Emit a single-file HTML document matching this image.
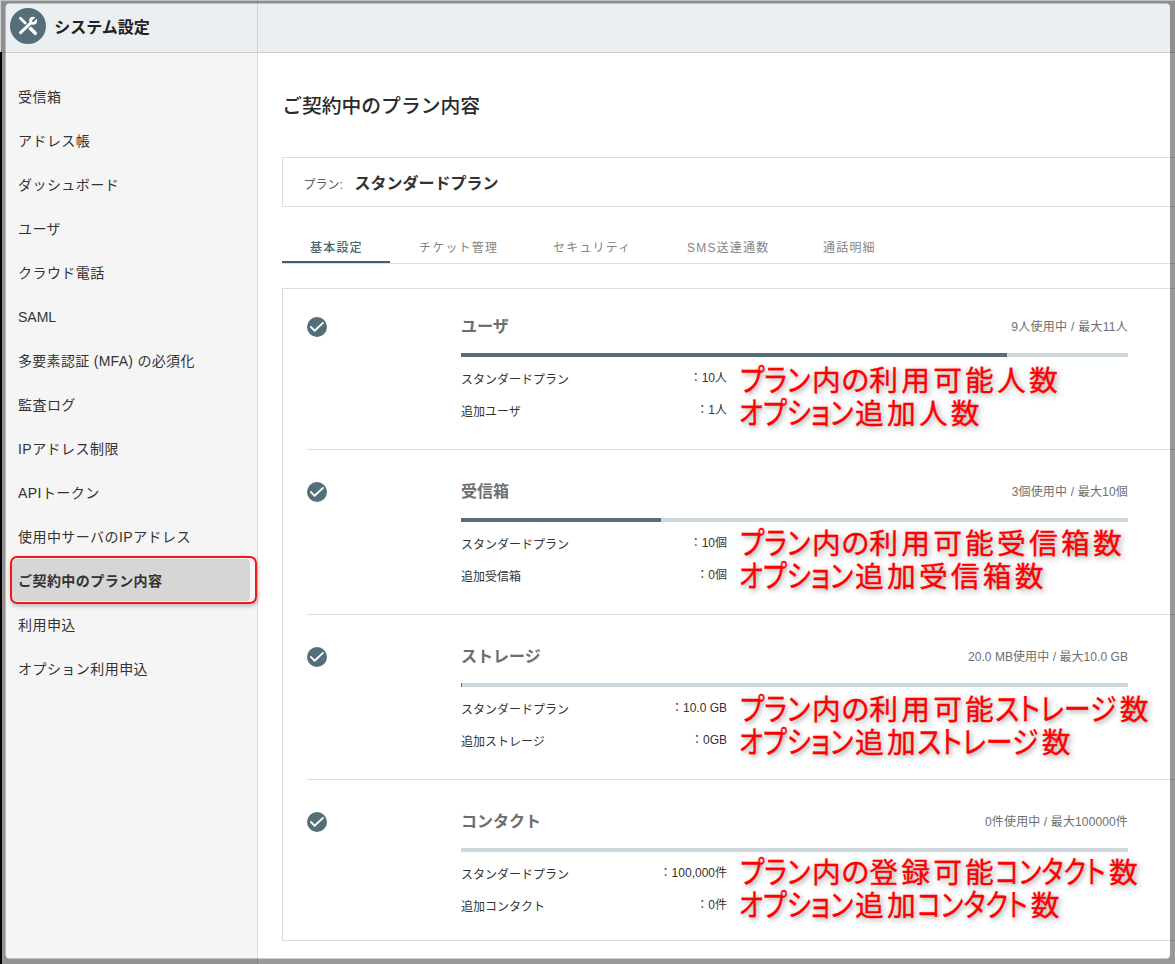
<!DOCTYPE html>
<html lang="ja">
<head>
<meta charset="utf-8">
<title>システム設定 - ご契約中のプラン内容</title>
<style>
*{box-sizing:border-box;margin:0;padding:0}
html,body{width:1175px;height:964px;overflow:hidden;background:#fff}
body{font-family:"Liberation Sans","Noto Sans CJK JP",sans-serif;color:#333;position:relative;font-size:14px}
.abs{position:absolute}
/* header */
#hdr{position:absolute;left:0;top:0;width:1175px;height:53px;background:#ebeff2;border-bottom:1px solid #c9ced2}
#hdrsep{position:absolute;left:257px;top:0;width:1px;height:52px;background:#cfd4d8}
#logo{position:absolute;left:10px;top:8px;width:36px;height:36px;border-radius:50%;background:#546e7a}
#logo svg{position:absolute;left:0;top:0}
#ttl{position:absolute;left:54.3px;top:15.7px;font-size:16px;font-weight:700;line-height:24px;color:#222;white-space:nowrap}
/* sidebar */
#side{position:absolute;left:0;top:53px;width:258px;height:911px;background:#f5f5f5;border-right:1px solid #dcdcdc}
.mi{position:absolute;left:18px;font-size:14px;line-height:24px;color:#333;white-space:nowrap;letter-spacing:.45px}
#selbg{position:absolute;left:12px;top:559px;width:238px;height:42px;background:#d6d6d6;border-radius:4px}
#selred{position:absolute;left:10px;top:556px;width:247px;height:48px;border:2px solid #f01818;border-radius:7px;box-shadow:1px 2px 4px rgba(0,0,0,.25)}
/* main */
#h1{position:absolute;left:282.2px;top:91px;font-size:19.8px;font-weight:500;line-height:30px;color:#2a2a2a;white-space:nowrap}
#plan{position:absolute;left:282px;top:157px;width:900px;height:50px;border:1px solid #dcdcdc;background:#fff}
#plan .l{position:absolute;left:20.4px;top:16px;font-size:12px;line-height:22px;color:#606060;font-weight:400;white-space:nowrap}
#plan .v{position:absolute;left:71.5px;top:14px;font-size:16px;line-height:24px;font-weight:700;color:#333;white-space:nowrap}
#tabline{position:absolute;left:282px;top:263px;width:900px;height:1px;background:#dcdcdc}
#tabact{position:absolute;left:282px;top:261px;width:108px;height:2px;background:#45616e}
.tab{position:absolute;top:237px;font-size:12px;line-height:22px;color:#858585;letter-spacing:1.2px;white-space:nowrap}
.tab.on{color:#4a6572;font-weight:500}
#card{position:absolute;left:282px;top:288px;width:900px;height:653px;border:1px solid #dcdcdc;background:#fff}
.sec{position:absolute;left:0;width:1175px;height:165px}
.sec .chk{position:absolute;left:306px;top:28px;width:22px;height:22px}
.sec .t{position:absolute;left:461px;top:26px;font-size:16px;font-weight:700;line-height:26px;color:#6e6e6e;white-space:nowrap}
.sec .u{position:absolute;right:47px;top:29px;font-size:12px;line-height:20px;color:#6e6e6e;white-space:nowrap}
.sec .bar{position:absolute;left:461px;top:65px;width:667px;height:4px;background:#cfd8dc}
.sec .bar i{display:block;height:4px;background:#546e7a}
.sec .k{position:absolute;left:461px;font-size:12px;line-height:20px;color:#333;white-space:nowrap}
.sec .v{position:absolute;right:448px;font-size:12px;line-height:20px;color:#333;white-space:nowrap}
.sec .r1{top:82px}
.sec .r2{top:114px}
.sec .v.r1{top:80px}
.sec .v.r2{top:112px}
.sec .dv{position:absolute;left:307px;top:161px;width:880px;height:1px;background:#dedede}
.red{position:absolute;left:740px;font-size:28.8px;line-height:34px;color:#f00;white-space:nowrap;font-feature-settings:"palt";letter-spacing:3.15px;font-weight:400;-webkit-text-stroke:.35px #f00;text-shadow:2px 2px 6px rgba(0,0,0,.42)}
.red span{letter-spacing:0}
.red .pl,.red .op,.red .st,.red .ct{display:inline-block;transform-origin:0 50%;font-size:31px;line-height:34px}
.red .pl{transform:scaleX(.85);margin-right:-10.9px}
.red .op{transform:scaleX(.838);margin-right:-20.6px}
.red .st{transform:scaleX(.871);margin-left:-2px;margin-right:-14.5px}
.red .ct{transform:scaleX(.813);margin-left:-2px;margin-right:-21.9px}
.red .no{letter-spacing:.7px}
.red .no2{letter-spacing:0}
.red.a{top:75px}
.red.b{top:108px;left:739.3px}
/* frame */
#frame{position:absolute;left:0;top:0;pointer-events:none}
#blk{position:absolute;left:0;top:52px;width:2px;height:912px;background:#000}
#toplite{position:absolute;left:0;top:0;width:1175px;height:1px;background:rgba(255,255,255,.45)}
#leftlite{position:absolute;left:0;top:0;width:1px;height:52px;background:#d2d2d2}
</style>
</head>
<body>
<div id="hdr"></div>
<div id="hdrsep"></div>
<div id="logo"><svg width="36" height="36" viewBox="0 0 36 36"><g stroke-linecap="round" fill="none"><path d="M10.4 10.3 L18 17.9" stroke="#fff" stroke-width="2.7"/><path d="M18 18 L25.3 25.3" stroke="#fff" stroke-width="3.5"/><path d="M12.5 22.7 L21.5 14.3" stroke="#546e7a" stroke-width="5" stroke-linecap="butt"/><path d="M10.6 24.6 L21.8 14" stroke="#fff" stroke-width="3"/></g><circle cx="23.1" cy="12.8" r="3.95" fill="#fff"/><path d="M23 13 L28.5 7.5" stroke="#546e7a" stroke-width="2" stroke-linecap="round"/></svg></div>
<div id="ttl">システム設定</div>

<div id="side"></div>
<div id="selbg"></div>
<div id="selred"></div>
<div class="mi" style="top:85px">受信箱</div>
<div class="mi" style="top:129px">アドレス帳</div>
<div class="mi" style="top:173px">ダッシュボード</div>
<div class="mi" style="top:217px">ユーザ</div>
<div class="mi" style="top:261px">クラウド電話</div>
<div class="mi" style="top:305px;letter-spacing:0">SAML</div>
<div class="mi" style="top:349px;letter-spacing:.3px">多要素認証 (MFA) の必須化</div>
<div class="mi" style="top:393px">監査ログ</div>
<div class="mi" style="top:437px">IPアドレス制限</div>
<div class="mi" style="top:481px">APIトークン</div>
<div class="mi" style="top:525px">使用中サーバのIPアドレス</div>
<div class="mi" style="top:569px;font-weight:700">ご契約中のプラン内容</div>
<div class="mi" style="top:613px">利用申込</div>
<div class="mi" style="top:657px">オプション利用申込</div>

<div id="h1">ご契約中のプラン内容</div>
<div id="plan"><span class="l">プラン:</span><span class="v">スタンダードプラン</span></div>

<div class="tab on" style="left:310px">基本設定</div>
<div class="tab" style="left:419px">チケット管理</div>
<div class="tab" style="left:553px">セキュリティ</div>
<div class="tab" style="left:687px">SMS送達通数</div>
<div class="tab" style="left:823px">通話明細</div>
<div id="tabline"></div>
<div id="tabact"></div>

<div id="card"></div>

<div class="sec" style="top:288px">
  <svg class="chk" viewBox="0 0 22 22"><circle cx="11" cy="11" r="10" fill="#546e7a"/><path d="M4.9 10.9 L8.6 14.8 L17 6.9" stroke="#fff" stroke-width="1.9" stroke-linecap="round" stroke-linejoin="round" fill="none"/></svg>
  <div class="t">ユーザ</div><div class="u" style="letter-spacing:.27px">9人使用中 / 最大11人</div>
  <div class="bar"><i style="width:546px"></i></div>
  <div class="k r1">スタンダードプラン</div><div class="v r1">：10人</div>
  <div class="k r2">追加ユーザ</div><div class="v r2">：1人</div>
  <div class="red a" style="top:76px"><span class="pl">プラン</span><span class="no">内</span><span class="no2">の</span>利用可能人数</div>
  <div class="red b" style="top:108.5px"><span class="op">オプション</span>追加人数</div>
  <div class="dv"></div>
</div>

<div class="sec" style="top:453px">
  <svg class="chk" viewBox="0 0 22 22"><circle cx="11" cy="11" r="10" fill="#546e7a"/><path d="M4.9 10.9 L8.6 14.8 L17 6.9" stroke="#fff" stroke-width="1.9" stroke-linecap="round" stroke-linejoin="round" fill="none"/></svg>
  <div class="t">受信箱</div><div class="u" style="letter-spacing:.18px">3個使用中 / 最大10個</div>
  <div class="bar"><i style="width:200px"></i></div>
  <div class="k r1">スタンダードプラン</div><div class="v r1">：10個</div>
  <div class="k r2">追加受信箱</div><div class="v r2">：0個</div>
  <div class="red a" style="top:74px"><span class="pl">プラン</span><span class="no">内</span><span class="no2">の</span>利用可能受信箱数</div>
  <div class="red b" style="top:106.7px"><span class="op">オプション</span>追加受信箱数</div>
  <div class="dv"></div>
</div>

<div class="sec" style="top:618px">
  <svg class="chk" viewBox="0 0 22 22"><circle cx="11" cy="11" r="10" fill="#546e7a"/><path d="M4.9 10.9 L8.6 14.8 L17 6.9" stroke="#fff" stroke-width="1.9" stroke-linecap="round" stroke-linejoin="round" fill="none"/></svg>
  <div class="t">ストレージ</div><div class="u" style="letter-spacing:.06px">20.0 MB使用中 / 最大10.0 GB</div>
  <div class="bar"><i style="width:1px"></i></div>
  <div class="k r1">スタンダードプラン</div><div class="v r1">：10.0 GB</div>
  <div class="k r2">追加ストレージ</div><div class="v r2">：0GB</div>
  <div class="red a" style="top:75px"><span class="pl">プラン</span><span class="no">内</span><span class="no2">の</span>利用可能<span class="st">ストレージ</span>数</div>
  <div class="red b" style="top:108px"><span class="op">オプション</span>追加<span class="st">ストレージ</span>数</div>
  <div class="dv"></div>
</div>

<div class="sec" style="top:783px">
  <svg class="chk" viewBox="0 0 22 22"><circle cx="11" cy="11" r="10" fill="#546e7a"/><path d="M4.9 10.9 L8.6 14.8 L17 6.9" stroke="#fff" stroke-width="1.9" stroke-linecap="round" stroke-linejoin="round" fill="none"/></svg>
  <div class="t">コンタクト</div><div class="u" style="letter-spacing:.13px">0件使用中 / 最大100000件</div>
  <div class="bar"></div>
  <div class="k r1">スタンダードプラン</div><div class="v r1">：100,000件</div>
  <div class="k r2">追加コンタクト</div><div class="v r2">：0件</div>
  <div class="red a" style="top:73px"><span class="pl">プラン</span><span class="no">内</span><span class="no2">の</span>登録可能<span class="ct">コンタクト</span>数</div>
  <div class="red b" style="top:105.8px"><span class="op">オプション</span>追加<span class="ct">コンタクト</span>数</div>
</div>

<svg id="frame" width="1175" height="964" viewBox="0 0 1175 964"><path fill="rgba(0,0,0,.4)" fill-rule="evenodd" d="M0 0H1175V964H0Z M9.6 3.6H1166A4 4 0 0 1 1170 7.6V954.4A4 4 0 0 1 1166 958.4H9.6A4 4 0 0 1 5.6 954.4V7.6A4 4 0 0 1 9.6 3.6Z"/></svg>
<div id="blk"></div>
<div id="toplite"></div>
<div id="leftlite"></div>
</body>
</html>
